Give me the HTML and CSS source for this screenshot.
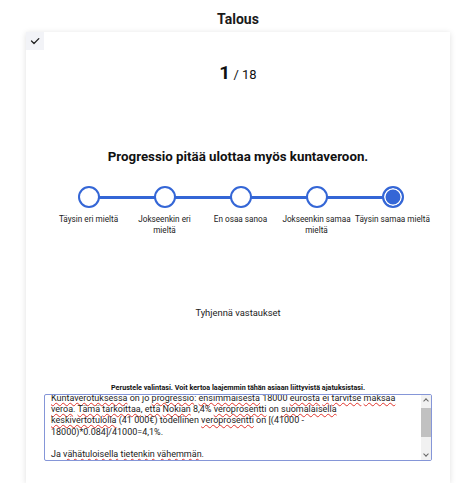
FILE: index.html
```html
<!DOCTYPE html>
<html lang="fi">
<head>
<meta charset="utf-8">
<title>Talous</title>
<link rel="stylesheet" href="styles.css">
</head>
<body>
<h1 class="title">Talous</h1>
<main class="card">
  <div class="check">
    <svg width="10" height="10" viewBox="0 0 10 10"><polyline points="1.5,5 4,7.5 8.8,2.6" fill="none" stroke="#222" stroke-width="1.3" stroke-linecap="round" stroke-linejoin="round"/></svg>
  </div>
  <div class="counter"><span class="num">1</span> / 18</div>
  <h2 class="question">Progressio pitää ulottaa myös kuntaveroon.</h2>
  <div class="scale">
    <div class="opt"><span class="dot"></span><span class="lbl">Täysin eri mieltä</span></div>
    <div class="opt"><span class="dot"></span><span class="lbl">Jokseenkin eri mieltä</span></div>
    <div class="opt"><span class="dot"></span><span class="lbl">En osaa sanoa</span></div>
    <div class="opt"><span class="dot"></span><span class="lbl">Jokseenkin samaa mieltä</span></div>
    <div class="opt"><span class="dot selected"></span><span class="lbl">Täysin samaa mieltä</span></div>
  </div>
  <div class="clear">Tyhjennä vastaukset</div>
  <p class="hint">Perustele valintasi. Voit kertoa laajemmin tähän asiaan liittyvistä ajatuksistasi.</p>
  <div class="textarea">
    <div class="ta-text"><span class="sp">Kuntaverotuksessa</span> on jo <span class="sp">progressio</span>: <span class="sp">ensimmäisestä</span> 18000 <span class="sp">eurosta</span> <span class="sp">ei</span> <span class="sp">tarvitse</span> <span class="sp">maksaa</span><br><span class="sp">veroa</span>. <span class="sp">Tämä</span> <span class="sp">tarkoittaa</span>, <span class="sp">että</span> <span class="sp">Nokian</span> 8,4% <span class="sp">veroprosentti</span> on <span class="sp">suomalaisella</span><br><span class="sp">keskivertotulolla</span> (41 000€) todellinen <span class="sp">veroprosentti</span> on [(41000 -<br>18000)*0.084]/41000=4,1%.<br><br>Ja <span class="sp">vähätuloisella</span> <span class="sp">tietenkin</span> <span class="sp">vähemmän</span>.</div>
    <div class="sb">
      <span class="arrow up"></span>
      <div class="track"><div class="thumb"></div></div>
      <span class="arrow down"></span>
    </div>
  </div>
</main>
</body>
</html>
```

FILE: styles.css
```css
* { box-sizing: border-box; }
body {
  margin: 0;
  background: #fff;
  font-family: "Roboto", "Noto Sans", sans-serif;
  color: #1a1a1a;
}
.title {
  margin: 0;
  padding-top: 10px;
  text-align: center;
  font-size: 14px;
  line-height: 18px;
  font-weight: 700;
  margin-left: 26px;
  width: 424px;
}
.card {
  margin: 4px 0 0 26px;
  width: 424px;
  height: 451px;
  background: #fff;
  box-shadow: 0 1px 6px rgba(0,0,0,0.13);
  display: flex;
  flex-direction: column;
  align-items: center;
}
.check {
  align-self: flex-start;
  width: 18px;
  height: 18px;
  background: #f2f3f7;
  display: flex;
  align-items: center;
  justify-content: center;
}
.counter {
  margin-top: 12px;
  font-size: 13px;
  line-height: 22px;
  color: #111;
}
.counter .num {
  font-size: 19px;
  font-weight: 700;
}
.question {
  margin: 62px 0 0;
  font-size: 13.3px;
  line-height: 18px;
  font-weight: 700;
  color: #111;
}
.scale {
  margin-top: 20px;
  width: 375px;
  display: flex;
  position: relative;
}
.scale::before {
  content: "";
  position: absolute;
  left: 37px;
  right: 37px;
  top: 10px;
  height: 2.5px;
  background: #3466d6;
}
.opt {
  flex: 1 1 0;
  display: flex;
  flex-direction: column;
  align-items: center;
}
.dot {
  width: 22px;
  height: 22px;
  border-radius: 50%;
  border: 2.5px solid #3466d6;
  background: #fff;
  position: relative;
}
.dot.selected {
  background: #3466d6;
  box-shadow: inset 0 0 0 1.5px #fff;
}
.lbl {
  margin-top: 6px;
  font-size: 8.2px;
  line-height: 10.5px;
  text-align: center;
  color: #222;
  width: 76px;
}
.clear {
  margin-top: 71px;
  font-size: 9.4px;
  line-height: 14px;
  color: #222;
}
.hint {
  margin: 63px 0 0;
  font-size: 7.2px;
  line-height: 9px;
  font-weight: 700;
  color: #111;
}
.textarea {
  margin-top: 2px;
  width: 388px;
  height: 67px;
  border: 1px solid #8596d8;
  border-radius: 2px;
  display: flex;
  overflow: hidden;
}
.ta-text {
  flex: 1;
  padding: 0 0 0 6px;
  margin-top: -2px;
  font-size: 9px;
  line-height: 11.2px;
  color: #222;
  white-space: nowrap;
  overflow: hidden;
}
.sp {
  text-decoration: underline wavy #e0342c;
  text-decoration-thickness: 0.7px;
  text-underline-offset: 1px;
  text-decoration-skip-ink: none;
}
.sb {
  width: 10px;
  background: #f1f1f1;
  display: flex;
  flex-direction: column;
}
.arrow {
  height: 10px;
  display: flex;
  align-items: center;
  justify-content: center;
}
.arrow::before {
  content: "";
  width: 3px;
  height: 3px;
  border-left: 1px solid #666;
  border-top: 1px solid #666;
}
.arrow.up::before { transform: translateY(1px) rotate(45deg); }
.arrow.down::before { transform: translateY(-1px) rotate(225deg); }
.track {
  flex: 1;
  padding-top: 3px;
}
.thumb {
  height: 29px;
  background: #c1c1c1;
}
```
